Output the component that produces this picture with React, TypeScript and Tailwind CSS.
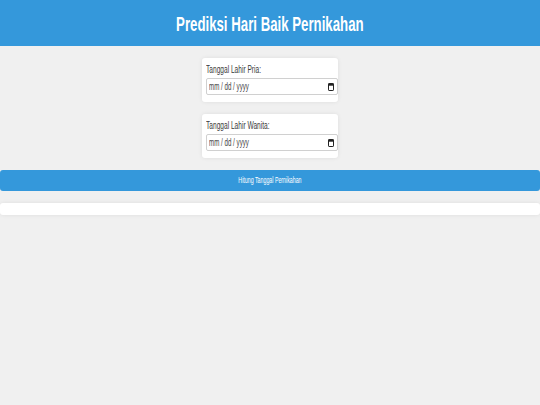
import React from "react";

function CalendarIcon() {
  return (
    <svg width="6" height="8" viewBox="0 0 6 8" className="shrink-0">
      <rect x="0.5" y="0.5" width="5" height="7" rx="0.6" fill="none" stroke="#222" strokeWidth="1" />
      <rect x="0.5" y="0.5" width="5" height="2.2" fill="#222" />
    </svg>
  );
}

function DateField({ label }: { label: string }) {
  return (
    <div className="w-[136px] bg-white rounded-[3px] shadow-[0_0_4px_rgba(0,0,0,0.08)] pt-[4px] pb-[7px] pl-[4px]">
      <div className="h-[14px] leading-[14px] text-[11px] text-[#3a3a3a] whitespace-nowrap">
        <span className="inline-block origin-left scale-x-[0.6]">{label}</span>
      </div>
      <div className="mt-[2px] h-[17px] w-[132px] border border-[#d0d0d0] rounded-[2px] bg-white flex items-center justify-between pl-[2px] pr-[3px]">
        <span className="inline-block origin-left scale-x-[0.62] text-[10px] text-[#444] whitespace-nowrap">mm / dd / yyyy</span>
        <CalendarIcon />
      </div>
    </div>
  );
}

export default function App() {
  return (
    <div className="min-h-[405px] bg-[#f0f0f0]" style={{ fontFamily: '"Liberation Sans", Arial, sans-serif' }}>
      <header className="h-[46px] bg-[#3498db] flex items-center justify-center">
        <h1 className="text-[21px] font-bold text-white whitespace-nowrap leading-none">
          <span className="inline-block scale-x-[0.63]">Prediksi Hari Baik Pernikahan</span>
        </h1>
      </header>

      <div className="flex flex-col items-center gap-[12px] pt-[12px]">
        <DateField label="Tanggal Lahir Pria:" />
        <DateField label="Tanggal Lahir Wanita:" />
      </div>

      <button className="mt-[12px] w-full h-[21px] bg-[#3498db] rounded-[3px] text-white text-[8.5px] flex items-center justify-center whitespace-nowrap">
        <span className="inline-block scale-x-[0.62]">Hitung Tanggal Pernikahan</span>
      </button>

      <div className="mt-[12px] h-[12px] bg-white rounded-[3px] shadow-[0_0_4px_rgba(0,0,0,0.08)]" />
    </div>
  );
}
